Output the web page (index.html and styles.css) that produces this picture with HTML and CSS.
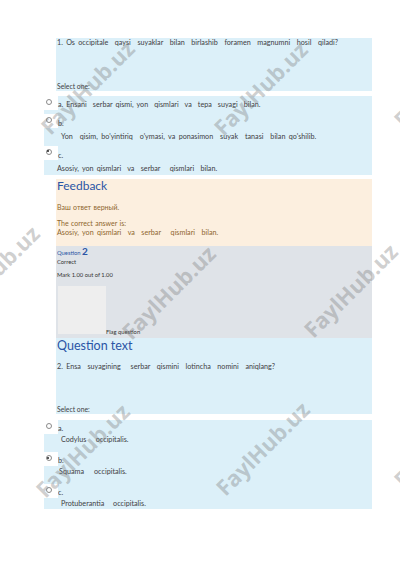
FILE: index.html
```html
<!DOCTYPE html>
<html>
<head>
<meta charset="utf-8">
<link rel="stylesheet" href="styles.css">
</head>
<body>
<div class="page">
  <div class="qbox q1">
    <div class="qt ws14">1. Os occipitale  qaysi  suyaklar  bilan  birlashib  foramen  magnumni  hosil  qiladi?</div>
    <div class="select">Select one:</div>
  </div>

  <div class="answers a1">
    <div class="ans first">
      <div class="head"><span class="radio"></span><span class="lbl ws12">a. Ensani  serbar qismi, yon  qismlari  va  tepa  suyagi  bilan.</span></div>
    </div>
    <div class="ans">
      <div class="head"><span class="radio"></span><span class="lbl">b.</span></div>
      <div class="atext in17 ws16">Yon  qisim, bo'yintiriq  o'ymasi, va ponasimon  suyak  tanasi  bilan qo'shilib.</div>
    </div>
    <div class="ans">
      <div class="head"><span class="radio checked"></span><span class="lbl">c.</span></div>
      <div class="atext in13">Asosiy, yon qismlari  va  serbar   qismlari  bilan.</div>
    </div>
  </div>

  <div class="feedback">
    <div class="fb-title">Feedback</div>
    <div class="fb-line first">Ваш ответ верный.</div>
    <div class="fb-line second">The correct answer is:</div>
    <div class="fb-line answer">Asosiy, yon qismlari  va  serbar   qismlari  bilan.</div>
  </div>

  <div class="info">
    <div class="qno"><span class="qword">Question</span> <span class="qnum">2</span></div>
    <div class="state">Correct</div>
    <div class="grade">Mark 1.00 out of 1.00</div>
    <div class="flagrow"><span class="flagbox"></span><span class="flagtext">Flag question</span></div>
  </div>

  <div class="qbox q2">
    <div class="qt-title">Question text</div>
    <div class="qt second ws14">2. Ensa  suyagining   serbar  qismini  lotincha  nomini  aniqlang?</div>
    <div class="select">Select one:</div>
  </div>

  <div class="answers a2">
    <div class="ans">
      <div class="head"><span class="radio"></span><span class="lbl">a.</span></div>
      <div class="atext in17">Codylus   occipitalis.</div>
    </div>
    <div class="ans">
      <div class="head"><span class="radio checked"></span><span class="lbl">b.</span></div>
      <div class="atext in15 ws30">Squama  occipitalis.</div>
    </div>
    <div class="ans">
      <div class="head"><span class="radio"></span><span class="lbl">c.</span></div>
      <div class="atext in17 ws26">Protuberantia  occipitalis.</div>
    </div>
  </div>

  <div class="wm wm1">FaylHub.uz</div>
  <div class="wm wm2">FaylHub.uz</div>
  <div class="wm wm3">FaylHub.uz</div>
  <div class="wm wm4">FaylHub.uz</div>
  <div class="wm wm5">FaylHub.uz</div>
  <div class="wm wm6">FaylHub.uz</div>
  <div class="wm wm7">FaylHub.uz</div>
  <div class="wm wm8">FaylHub.uz</div>
  <div class="wm wm9">FaylHub.uz</div>
</div>
</body>
</html>
```

FILE: styles.css
```css
html, body {
  margin: 0;
  padding: 0;
  background: #ffffff;
}

.page {
  position: relative;
  width: 400px;
  height: 566px;
  overflow: hidden;
  padding-top: 38px;
  box-sizing: border-box;
  font-family: Lato, "Open Sans", sans-serif;
  font-size: 7.2px;
  color: #3f4144;
}

.qt, .select, .lbl, .atext, .fb-line, .grade, .state, .flagtext {
  white-space: pre;
}

.qt, .lbl, .atext {
  word-spacing: 1.3px;
}

.fb-line {
  font-size: 7px;
  word-spacing: 0.6px;
}

.fb-line.answer {
  font-size: 7.2px;
  word-spacing: 1.4px;
}

.ws12 { word-spacing: 1.2px; }
.ws14 { word-spacing: 1.45px; }
.ws16 { word-spacing: 1.6px; }
.ws26 { word-spacing: 2.6px; }
.ws30 { word-spacing: 3.2px; }

.qbox {
  margin-left: 56px;
  width: 316px;
  background: #dcf0f9;
  display: flex;
  flex-direction: column;
  box-sizing: border-box;
  padding-left: 1px;
}

.q1 {
  height: 53px;
}

.q2 {
  height: 76px;
}

.qt {
  line-height: 10px;
}

.qt.second {
  margin-top: 8px;
}

.select {
  margin-top: auto;
  line-height: 10px;
  font-size: 6.8px;
}

.qt-title {
  font-size: 12.5px;
  line-height: 16px;
  color: #2a55a5;
}

.answers {
  margin-left: 44px;
  width: 328px;
  background: #dcf0f9;
  box-sizing: border-box;
}

.a1 {
  margin-top: 5px;
  height: 79px;
}

.a2 {
  margin-top: 6px;
  height: 89px;
}

.head {
  display: flex;
  align-items: flex-end;
  height: 14px;
}

.radio {
  position: relative;
  width: 14px;
  height: 14px;
  flex: none;
  background: #ffffff;
  align-self: flex-start;
}

.radio::before {
  content: "";
  position: absolute;
  left: 1.5px;
  top: 3px;
  width: 4px;
  height: 4px;
  border-radius: 50%;
  border: 0.8px solid #8a8a8a;
  background: #ffffff;
}

.radio.checked::after {
  content: "";
  position: absolute;
  left: 3.3px;
  top: 4.8px;
  width: 2px;
  height: 2px;
  border-radius: 50%;
  background: #222222;
}

.lbl {
  line-height: 10px;
}

.a1 .ans {
  margin-top: 3.5px;
}

.a1 .ans.first {
  margin-top: 0;
}

.a1 .ans .lbl {
  position: relative;
  top: 1px;
}

.a1 .ans.first .lbl {
  top: 0;
}

.a1 .atext {
  margin-top: 3.5px;
  line-height: 11px;
}

.a2 .ans {
  margin-bottom: 7px;
}

.a2 .atext {
  line-height: 11px;
}

.in13 {
  padding-left: 13px;
}

.in15 {
  padding-left: 15px;
}

.in17 {
  padding-left: 17px;
}

.feedback {
  margin-top: 4px;
  margin-left: 56px;
  width: 316px;
  height: 67px;
  background: #fcefdf;
  box-sizing: border-box;
  padding-left: 1px;
  color: #8e662e;
}

.fb-title {
  font-size: 12px;
  line-height: 14px;
  color: #2a55a5;
}

.fb-line {
  line-height: 9px;
}

.fb-line.first {
  margin-top: 9px;
  line-height: 10px;
}

.fb-line.second {
  margin-top: 7px;
}

.info {
  margin-left: 56px;
  width: 316px;
  height: 92px;
  background: #dfe3e8;
  box-sizing: border-box;
  padding-left: 1px;
  font-size: 5.8px;
  color: #333333;
}

.qno {
  line-height: 10px;
  color: #2a55a5;
}

.qword {
  font-size: 5.8px;
}

.qnum {
  font-size: 10px;
  font-weight: bold;
}

.state {
  line-height: 8px;
}

.grade {
  margin-top: 4px;
  line-height: 10px;
}

.flagrow {
  display: flex;
  align-items: flex-end;
  margin-top: 6px;
  margin-left: 1px;
}

.flagbox {
  width: 48px;
  height: 48px;
  background: #eeeeee;
}

.flagtext {
  line-height: 8px;
  margin-bottom: -2px;
}

.wm {
  position: absolute;
  width: 140px;
  margin-left: -70px;
  margin-top: -12px;
  text-align: center;
  font-family: "Open Sans", sans-serif;
  font-weight: 700;
  font-size: 22px;
  line-height: 24px;
  color: rgba(120, 120, 120, 0.36);
  transform: rotate(-45deg);
  pointer-events: none;
  white-space: nowrap;
}

.wm1 { left: 87px; top: 87px; }
.wm2 { left: 260px; top: 88px; }
.wm3 { left: 440px; top: 80px; }
.wm4 { left: -8px; top: 272px; }
.wm5 { left: 168px; top: 292px; }
.wm6 { left: 350px; top: 290px; }
.wm7 { left: 82px; top: 450px; }
.wm8 { left: 262px; top: 448px; }
.wm9 { left: 440px; top: 440px; }
```
